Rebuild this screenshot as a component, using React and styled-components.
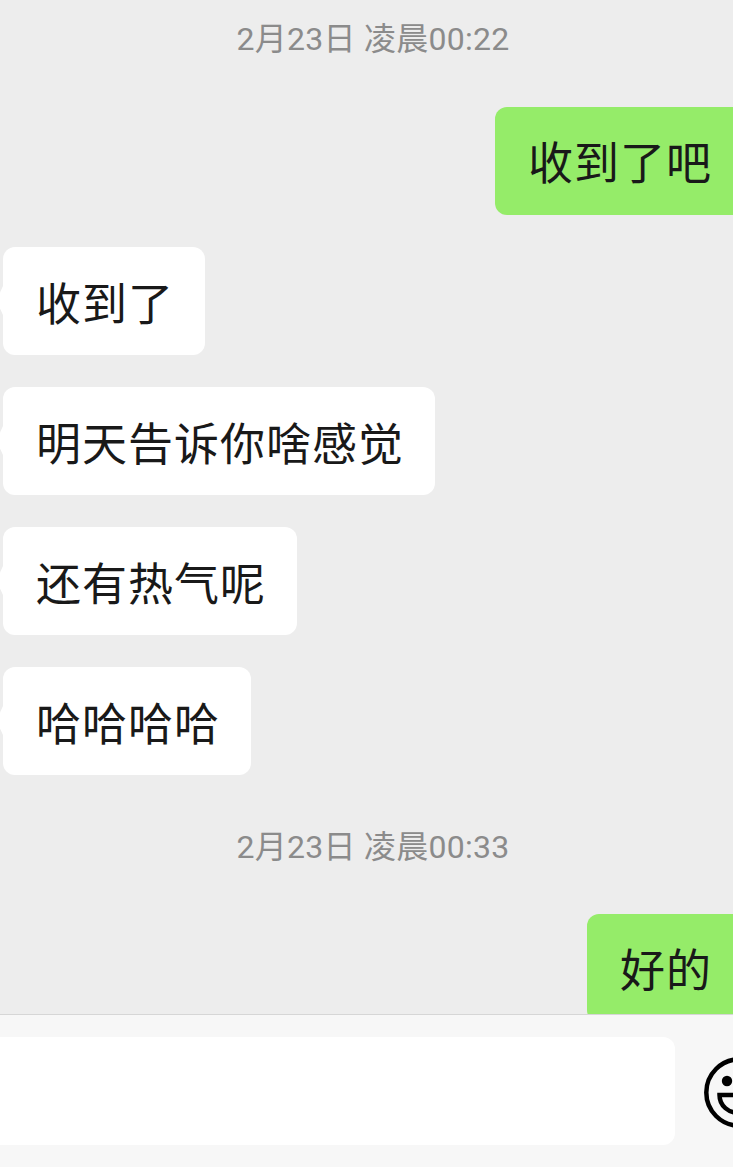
import styled, { createGlobalStyle } from "styled-components";

const GlobalStyle = createGlobalStyle`
  html, body {
    margin: 0;
    padding: 0;
    background: #ededed;
  }
`;

const Screen = styled.div`
  width: 733px;
  height: 1167px;
  display: flex;
  flex-direction: column;
  overflow: hidden;
  font-family: "Noto Sans CJK SC", "Roboto", sans-serif;
`;

const Messages = styled.div`
  height: 1014px;
  flex: none;
  overflow: hidden;
  display: flex;
  flex-direction: column;
  padding-left: 3px;
`;

const Time = styled.div`
  height: 32px;
  margin-top: ${(p) => p.$top}px;
  margin-bottom: ${(p) => p.$bottom}px;
  padding-left: 10px;
  line-height: 32px;
  text-align: center;
  font-family: "Roboto", "Noto Sans CJK SC", sans-serif;
  font-size: 32px;
  letter-spacing: 0.25px;
  color: #8b8b8b;
  white-space: pre;
`;

const Bubble = styled.div`
  position: relative;
  flex: none;
  box-sizing: border-box;
  height: 108px;
  margin-bottom: 32px;
  padding: ${(p) => (p.$mine ? "0 21px 0 33px" : "1px 31px 0 33px")};
  line-height: 108px;
  font-size: 45px;
  letter-spacing: 1px;
  color: #191919;
  white-space: nowrap;
  align-self: ${(p) => (p.$mine ? "flex-end" : "flex-start")};
  background: ${(p) => (p.$mine ? "#95ec69" : "#ffffff")};
  border-radius: ${(p) => (p.$mine ? "12px 0 0 12px" : "12px")};

  ${(p) =>
    !p.$mine &&
    `
    &::before {
      content: "";
      position: absolute;
      left: -3px;
      top: 39px;
      width: 3px;
      height: 29px;
      background: #ffffff;
      clip-path: polygon(100% 0, 0 22%, 0 78%, 100% 100%);
    }
  `}
`;

const InputBar = styled.div`
  flex: 1;
  box-sizing: border-box;
  display: flex;
  align-items: flex-start;
  border-top: 1px solid #d6d6d6;
  background: #f7f7f7;
  padding-top: 22px;
`;

const InputBox = styled.div`
  width: 675px;
  height: 108px;
  flex: none;
  background: #ffffff;
  border-radius: 0 12px 12px 0;
`;

const EmojiIcon = styled.svg`
  flex: none;
  width: 71px;
  height: 71px;
  margin: 20px 0 0 29px;
`;

export default function App() {
  return (
    <Screen>
      <GlobalStyle />
      <Messages>
        <Time $top={23} $bottom={52}>2月23日 凌晨00:22</Time>
        <Bubble $mine>收到了吧</Bubble>
        <Bubble>收到了</Bubble>
        <Bubble>明天告诉你啥感觉</Bubble>
        <Bubble>还有热气呢</Bubble>
        <Bubble>哈哈哈哈</Bubble>
        <Time $top={24} $bottom={51}>2月23日 凌晨00:33</Time>
        <Bubble $mine>好的</Bubble>
      </Messages>
      <InputBar>
        <InputBox />
        <EmojiIcon viewBox="0 0 71 71" fill="none" stroke="#000" strokeWidth="4.5">
          <circle cx="35.5" cy="35.5" r="33.2" />
          <circle cx="23" cy="24" r="5.2" fill="#000" stroke="none" />
          <circle cx="48" cy="24" r="5.2" fill="#000" stroke="none" />
          <path d="M15.5 38 H55.5 C55.5 49 46.5 56 35.5 56 C24.5 56 15.5 49 15.5 38 Z" />
        </EmojiIcon>
      </InputBar>
    </Screen>
  );
}
